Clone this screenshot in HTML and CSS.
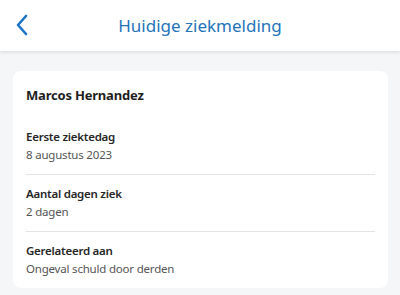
FILE: index.html
```html
<!DOCTYPE html>
<html lang="nl">

<head>
    <meta charset="UTF-8">
    <meta name="viewport" content="width=device-width, initial-scale=1.0">
    <title>Huidige ziekmelding</title>
    <link rel="stylesheet" href="styles.css">
</head>

<body>
    <header class="topbar">
        <button class="back-btn" aria-label="Terug">
            <svg width="14" height="22" viewBox="0 0 14 22">
                <path d="M11 2 L3 11 L11 20" fill="none" stroke="#1b73c6" stroke-width="2.6" stroke-linecap="round" stroke-linejoin="round"/>
            </svg>
        </button>
        <h1 class="title">Huidige ziekmelding</h1>
    </header>

    <main class="content">
        <section class="card">
            <h2 class="employee">Marcos Hernandez</h2>
            <div class="row">
                <div class="label">Eerste ziektedag</div>
                <div class="value">8 augustus 2023</div>
            </div>
            <div class="row">
                <div class="label">Aantal dagen ziek</div>
                <div class="value">2 dagen</div>
            </div>
            <div class="row">
                <div class="label">Gerelateerd aan</div>
                <div class="value">Ongeval schuld door derden</div>
            </div>
        </section>
    </main>
</body>

</html>
```

FILE: styles.css
```css
body {
    margin: 0;
    font-family: "Noto Sans", "Open Sans", sans-serif;
    background: #f5f6f8;
    color: #222;
}

.topbar {
    position: relative;
    height: 51px;
    background: white;
    display: flex;
    align-items: center;
    justify-content: center;
    box-shadow: 0 1px 4px rgba(0, 0, 0, 0.12);
}

.back-btn {
    position: absolute;
    left: 15px;
    top: 14px;
    padding: 0;
    border: none;
    background: none;
    cursor: pointer;
}

.title {
    margin: 0 0 1px;
    font-size: 17px;
    font-weight: 400;
    color: #2474ba;
}

.content {
    padding: 20px 12px 10px 13px;
}

.card {
    background: white;
    border-radius: 8px;
    padding: 15px 13px 0;
}

.employee {
    margin: 0 0 14px;
    font-size: 13px;
    font-weight: 700;
    line-height: 18px;
    letter-spacing: -0.2px;
    color: #1e1e1e;
}

.row {
    padding: 10px 0;
    border-bottom: 1px solid #e4e4e6;
}

.row:last-child {
    border-bottom: none;
}

.label {
    font-size: 11.5px;
    font-weight: 600;
    line-height: 18px;
    letter-spacing: -0.25px;
    color: #262626;
}

.value {
    font-size: 11.5px;
    line-height: 18px;
    letter-spacing: -0.2px;
    color: #555;
}
```
